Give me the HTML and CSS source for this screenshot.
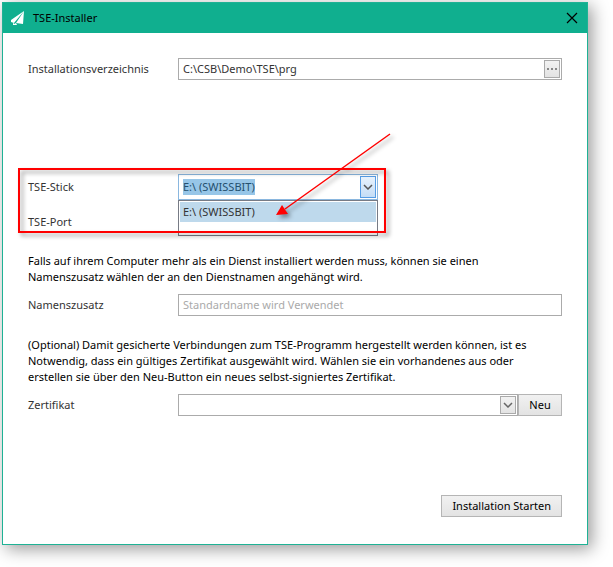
FILE: index.html
```html
<!DOCTYPE html>
<html lang="de">
<head>
<meta charset="utf-8">
<title>TSE-Installer</title>
<link rel="stylesheet" href="styles.css">
</head>
<body>
<main class="window">
  <header class="titlebar">
    <svg class="logo" width="14" height="14" viewBox="0 0 14 14" aria-hidden="true">
      <path d="M13 0 0 9v2l3 1zM13 0 5 12l7 1z" fill="#fff"/>
      <path d="M2 11v3h4l-1-2-2 1z" fill="#fff"/>
    </svg>
    <h1 class="title">TSE-Installer</h1>
    <button class="close" type="button" aria-label="Schließen">
      <svg width="12" height="12" viewBox="0 0 12 12"><path d="M1 1 11 11M11 1 1 11" stroke="#000" stroke-width="1.200"/></svg>
    </button>
  </header>
  <form class="content">
    <div class="row">
      <label for="dir">Installationsverzeichnis</label>
      <div class="field">
        <input id="dir" type="text" value="C:\CSB\Demo\TSE\prg">
        <button class="inset" type="button" aria-label="Durchsuchen">
          <svg width="10" height="2" viewBox="0 0 10 2"><path d="M0 0h2v2H0zM4 0h2v2H4zM8 0h2v2H8z" fill="#888"/></svg>
        </button>
      </div>
    </div>

    <section class="device">
      <div class="row stick">
        <label for="stick">TSE-Stick</label>
        <div class="field combo">
          <div id="stick" class="combo-text" role="combobox" tabindex="0" aria-expanded="true" aria-controls="drives"><span class="marked">E:\ (SWISSBIT)</span></div>
          <button class="inset active" type="button" aria-label="Laufwerke anzeigen">
            <svg width="10" height="6" viewBox="0 0 10 6"><path d="M1 1 5 5 9 1" fill="none" stroke="#555" stroke-width="1.500"/></svg>
          </button>
          <ul id="drives" class="options" role="listbox">
            <li role="option" aria-selected="true">E:\ (SWISSBIT)</li>
          </ul>
        </div>
      </div>
      <div class="row port"><span>TSE-Port</span></div>
      <svg class="marker" viewBox="0 0 404 120" aria-hidden="true">
        <rect x="11" y="43" width="366" height="63" fill="none" stroke="#f00" stroke-width="2"/>
        <path d="M382 8 277 83" stroke="#f00" stroke-width="1.500"/>
        <path d="M268 89 274 79 280 88z" fill="#f00"/>
      </svg>
    </section>

    <p class="hint">Falls auf ihrem Computer mehr als ein Dienst installiert werden muss, können sie einen<br>Namenszusatz wählen der an den Dienstnamen angehängt wird.</p>
    <div class="row">
      <label for="suffix">Namenszusatz</label>
      <div class="field"><input id="suffix" type="text" placeholder="Standardname wird Verwendet"></div>
    </div>

    <p class="hint second">(Optional) Damit gesicherte Verbindungen zum TSE-Programm hergestellt werden können, ist es<br>Notwendig, dass ein gültiges Zertifikat ausgewählt wird. Wählen sie ein vorhandenes aus oder<br>erstellen sie über den Neu-Button ein neues selbst-signiertes Zertifikat.</p>
    <div class="row">
      <label for="cert">Zertifikat</label>
      <div class="group">
        <div class="field">
          <select id="cert"><option value="" label=" "></option></select>
          <span class="inset" aria-hidden="true">
            <svg width="10" height="6" viewBox="0 0 10 6"><path d="M1 1 5 5 9 1" fill="none" stroke="#666" stroke-width="1.500"/></svg>
          </span>
        </div>
        <button class="button new" type="button">Neu</button>
      </div>
    </div>
    <footer class="actions"><button class="button start" type="submit">Installation Starten</button></footer>
  </form>
</main>
</body>
</html>
```
FILE: styles.css
```css
* { box-sizing: border-box; }

body {
  margin: 0;
  padding: 2px 25px 22px 2px;
  background: #fff;
  color: #333;
  font: 11px/16px "Noto Sans", "Open Sans", sans-serif;
}

button, input, select { font: inherit; color: inherit; border-radius: 0; }

.window {
  background: #fff;
  border: 1px solid #1fb295;
  box-shadow: 4px 4px 16px rgba(0, 0, 0, .4);
}

.titlebar {
  display: flex;
  align-items: center;
  height: 30px;
  padding: 0 8px;
  background: #10af8f;
  color: #000;
}

.title { flex: 1; margin: 0 0 0 8px; font: inherit; }

.close {
  display: flex;
  padding: 1px;
  border: 0;
  background: none;
}

.content { padding: 25px 25px 27px; }

.row {
  display: grid;
  grid-template-columns: 150px 1fr;
  align-items: center;
}

.field {
  position: relative;
  display: flex;
  flex: 1;
  height: 22px;
  padding: 1px;
  border: 1px solid #ababab;
  background: #fff;
}

.field input, .field select {
  flex: 1;
  min-width: 0;
  padding: 0 3px;
  border: 0;
  outline: 0;
  background: none;
  appearance: none;
}

.field input::placeholder { color: #aaa; opacity: 1; }

.inset {
  display: flex;
  align-items: center;
  justify-content: center;
  width: 16px;
  padding: 0;
  border: 1px solid #aaa;
  background: linear-gradient(#f2f2f2, #e3e3e3);
}

.device { position: relative; margin-top: 94px; }

.combo {
  width: 200px;
  height: 26px;
  border-color: #8ab7df;
}

.combo-text { flex: 1; padding: 3px; outline: 0; }

.marked { display: inline-block; background: #97c6e8; color: #24506f; }

.inset.active { border-color: #569de5; background: linear-gradient(#e8f2fc, #c4ddf6); }

.options {
  position: absolute;
  top: 25px;
  left: -1px;
  right: -1px;
  height: 36px;
  margin: 0;
  padding: 1px;
  border: 1px solid #777b85;
  background: #fff;
  list-style: none;
}

.options li { padding: 2px 3px; background: #bed9ec; }

.port { height: 44px; }

.marker {
  position: absolute;
  top: -48px;
  left: -20px;
  width: 404px;
  height: 120px;
  pointer-events: none;
  filter: drop-shadow(3px 3px 2px rgba(0, 0, 0, .4));
}

.hint { margin: 9px 0; color: #000; white-space: nowrap; }

.hint.second { margin-top: 21px; }

.group { display: flex; }

.button {
  height: 22px;
  padding: 0;
  border: 1px solid #b5b5b5;
  background: linear-gradient(#f1f1f1, #e3e3e3);
  color: #000;
}

.new { width: 44px; }

.actions { display: flex; justify-content: flex-end; margin-top: 79px; }

.start { padding: 0 10px; }
```
